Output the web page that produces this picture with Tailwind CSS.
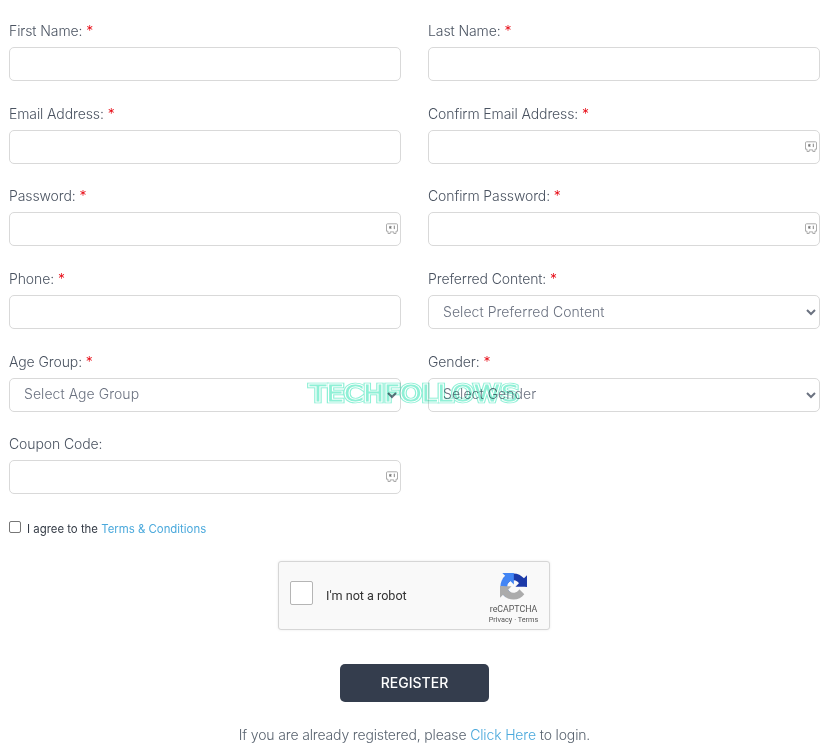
<!DOCTYPE html>
<html lang="en">
<head>
<meta charset="utf-8">
<title>Register</title>
<script src="https://cdn.jsdelivr.net/npm/@tailwindcss/browser@4"></script>
</head>
<body class="bg-white overflow-hidden font-['Inter',sans-serif] font-light text-[#4a5361]">
<svg width="0" height="0" class="absolute">
  <defs>
    <symbol id="cred" viewBox="0 0 12 12">
      <path d="M1.500 .8h9a1 1 0 0 1 1 1v6.400h-1.500v2.300H7.800V8.900H4.200v1.600H2V8.200H.5V1.800a1 1 0 0 1 1-1z" fill="none" stroke="#a3a3a3" stroke-width=".9"/>
      <path d="M4.300 2.900v3M3 3.600l2.600 1.600M5.600 3.600L3 5.200M8.300 2.700v3.400" fill="none" stroke="#777" stroke-width=".9"/>
    </symbol>
    <path id="arm" d="M64 31.955l-.033-1.37V5.500l-7.160 7.160C50.930 5.490 41.970.953 31.954.953c-10.424 0-19.680 4.982-25.534 12.700l11.733 11.857a15.540 15.540 0 0 1 4.748-5.330c2.048-1.598 4.950-2.905 8.973-2.905.486 0 .860.057 1.136.163 4.984.394 9.304 3.145 11.848 7.140l-8.305 8.305c10.520-.040 22.404-.066 31.946.070"/>
  </defs>
</svg>
<main class="relative w-[829px] h-[751px] pt-[21px] px-[9px]">
  <form>
    <div class="grid grid-cols-2 gap-x-[27px] gap-y-[22.67px]">
      <div>
        <label class="block text-sm leading-[19px] mb-[7px] tracking-[-0.1px]">First Name: <span class="text-red-600">*</span></label>
        <input type="text" class="block w-full h-[34px] bg-white border border-[#d9d9d9] rounded-[5px]">
      </div>
      <div>
        <label class="block text-sm leading-[19px] mb-[7px] tracking-[-0.1px]">Last Name: <span class="text-red-600">*</span></label>
        <input type="text" class="block w-full h-[34px] bg-white border border-[#d9d9d9] rounded-[5px]">
      </div>
      <div>
        <label class="block text-sm leading-[19px] mb-[7px] tracking-[-0.1px]">Email Address: <span class="text-red-600">*</span></label>
        <input type="email" class="block w-full h-[34px] bg-white border border-[#d9d9d9] rounded-[5px]">
      </div>
      <div>
        <label class="block text-sm leading-[19px] mb-[7px] tracking-[-0.1px]">Confirm Email Address: <span class="text-red-600">*</span></label>
        <div class="relative">
          <input type="email" class="block w-full h-[34px] bg-white border border-[#d9d9d9] rounded-[5px]">
          <svg class="absolute right-[3px] top-[11px] w-3 h-3"><use href="#cred"/></svg>
        </div>
      </div>
      <div>
        <label class="block text-sm leading-[19px] mb-[7px] tracking-[-0.1px]">Password: <span class="text-red-600">*</span></label>
        <div class="relative">
          <input type="password" class="block w-full h-[34px] bg-white border border-[#d9d9d9] rounded-[5px]">
          <svg class="absolute right-[3px] top-[11px] w-3 h-3"><use href="#cred"/></svg>
        </div>
      </div>
      <div>
        <label class="block text-sm leading-[19px] mb-[7px] tracking-[-0.1px]">Confirm Password: <span class="text-red-600">*</span></label>
        <div class="relative">
          <input type="password" class="block w-full h-[34px] bg-white border border-[#d9d9d9] rounded-[5px]">
          <svg class="absolute right-[3px] top-[11px] w-3 h-3"><use href="#cred"/></svg>
        </div>
      </div>
      <div>
        <label class="block text-sm leading-[19px] mb-[7px] tracking-[-0.1px]">Phone: <span class="text-red-600">*</span></label>
        <input type="tel" class="block w-full h-[34px] bg-white border border-[#d9d9d9] rounded-[5px]">
      </div>
      <div>
        <label class="block text-sm leading-[19px] mb-[7px] tracking-[-0.1px]">Preferred Content: <span class="text-red-600">*</span></label>
        <select class="block w-full h-[34px] pl-[10px] bg-white border border-[#d9d9d9] rounded-[5px] text-sm tracking-[0.05px] text-[#6b7280]">
          <option>Select Preferred Content</option>
        </select>
      </div>
      <div>
        <label class="block text-sm leading-[19px] mb-[7px] tracking-[-0.1px]">Age Group: <span class="text-red-600">*</span></label>
        <select class="block w-full h-[34px] pl-[10px] pb-[2px] bg-white border border-[#d9d9d9] rounded-[5px] text-sm tracking-[0.05px] text-[#6b7280]">
          <option>Select Age Group</option>
        </select>
      </div>
      <div>
        <label class="block text-sm leading-[19px] mb-[7px] tracking-[-0.1px]">Gender: <span class="text-red-600">*</span></label>
        <select class="block w-full h-[34px] pl-[10px] pb-[2px] bg-white border border-[#d9d9d9] rounded-[5px] text-sm tracking-[0.05px] text-[#6b7280]">
          <option>Select Gender</option>
        </select>
      </div>
      <div>
        <label class="block text-sm leading-[19px] mb-[7px] tracking-[-0.1px]">Coupon Code:</label>
        <div class="relative">
          <input type="text" class="block w-full h-[34px] bg-white border border-[#d9d9d9] rounded-[5px]">
          <svg class="absolute right-[3px] top-[11px] w-3 h-3"><use href="#cred"/></svg>
        </div>
      </div>
    </div>

    <div class="flex items-start mt-[27px] h-[16px]">
      <input type="checkbox" class="w-3 h-3 mt-0 appearance-none bg-white border border-[#767676] rounded-[2px]">
      <span class="ml-[6px] text-[11.4px] leading-[16px] font-normal text-[#333a45]">I agree to the <a class="text-[#4ba9dc]">Terms &amp; Conditions</a></span>
    </div>

    <div class="mt-[24px] ml-[269px] w-[272px] h-[69px] flex items-center bg-[#f9f9f9] border border-[#d6d6d6] rounded-[3px] shadow-[0_0_3px_rgba(0,0,0,0.08)] font-['Roboto',sans-serif] font-normal">
      <span class="block ml-[11px] mb-[6px] w-[23px] h-[24px] bg-white border border-[#b5b5b5] rounded-[2px]"></span>
      <span class="ml-[13px] mt-[2px] text-[12.6px] text-[#333]">I'm not a robot</span>
      <div class="ml-auto w-[60px] mr-[5.500px] mt-[6px] flex flex-col items-center">
        <svg width="27" height="27" viewBox="0 0 64 64">
          <use href="#arm" fill="#1c3aa9"/>
          <use href="#arm" fill="#4285f4" transform="rotate(-90 32 32)"/>
          <use href="#arm" fill="#ababab" transform="rotate(180 32 32)"/>
        </svg>
        <div class="text-[8.800px] leading-[11px] text-[#555] mt-[4px]">reCAPTCHA</div>
        <div class="text-[7.300px] leading-[10px] text-[#555]">Privacy <span>·</span> Terms</div>
      </div>
    </div>

    <button type="button" class="block mt-[34px] ml-[331px] w-[149px] h-[38px] bg-[#343d4d] rounded-[5px] text-white text-sm font-medium">REGISTER</button>

    <p class="mt-[22px] text-center text-sm leading-[21px] tracking-[-0.15px] text-[#59636f]">If you are already registered, please <a class="text-[#4ba9dc]">Click Here</a> to login.</p>
  </form>

  <svg class="absolute left-[300px] top-[375px] mix-blend-multiply pointer-events-none" width="230" height="36" viewBox="0 0 230 36">
    <defs>
      <text id="wm" x="9.500" y="25.750" textLength="209" lengthAdjust="spacingAndGlyphs" font-family="DejaVu Sans" font-size="21">TECHFOLLOWS</text>
    </defs>
    <use href="#wm" fill="#8ff0d6" stroke="#8ff0d6" stroke-width="4.600"/>
    <use href="#wm" fill="#ffffff" stroke="#ffffff" stroke-width="2.800"/>
    <use href="#wm" fill="#8ff0d6" stroke="#8ff0d6" stroke-width="1.000"/>
  </svg>
</main>
</body>
</html>
